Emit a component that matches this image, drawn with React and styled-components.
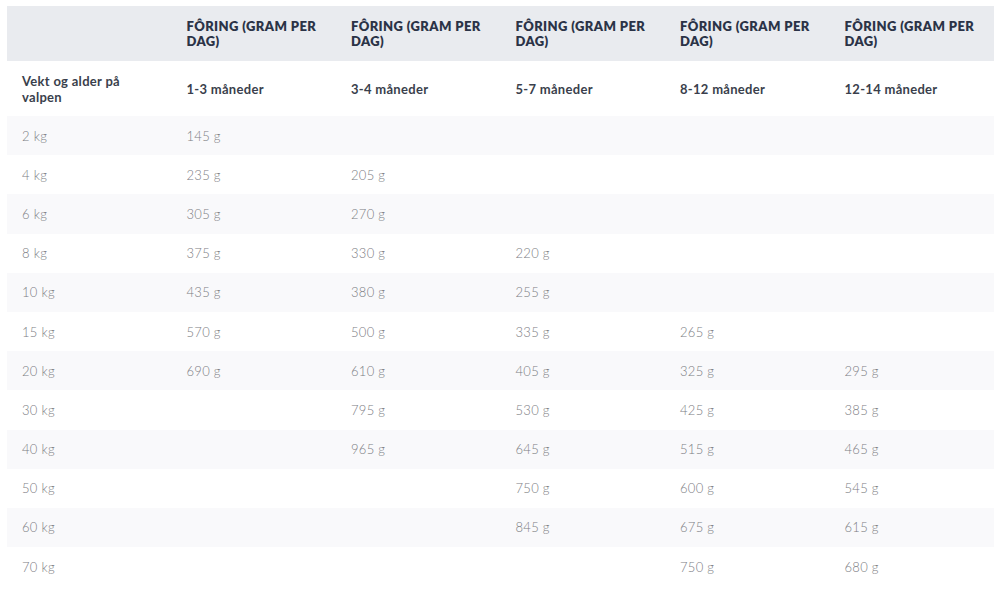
import React from 'react';
import styled, { createGlobalStyle } from 'styled-components';

const GlobalStyle = createGlobalStyle`
  body {
    margin: 0;
    background: #ffffff;
    font-family: "Lato", "Open Sans", sans-serif;
  }
`;

const Wrapper = styled.div`
  padding: 6px 6px 0 7px;
`;

const Table = styled.table`
  width: 987px;
  border-collapse: collapse;
  table-layout: fixed;
`;

const HeadCell = styled.th`
  height: 55px;
  padding: 0 15px;
  background: #e9ebef;
  color: #2b3347;
  font-size: 13px;
  font-weight: 800;
  letter-spacing: 0.4px;
  line-height: 15px;
  text-align: left;
  vertical-align: middle;
  text-transform: uppercase;
`;

const SubCell = styled.td`
  height: 55px;
  padding: 0 15px;
  color: #3a3f4c;
  font-size: 13px;
  font-weight: 700;
  line-height: 16px;
  letter-spacing: 0.3px;
  vertical-align: middle;
`;

const Row = styled.tr`
  background: ${(p) => (p.$shaded ? '#f9f9fb' : '#ffffff')};
`;

const Cell = styled.td`
  height: 39.2px;
  padding: 0 15px;
  color: #7c7d83;
  font-size: 13px;
  font-weight: 300;
  letter-spacing: 0.3px;
  vertical-align: middle;
`;

const ages = ['1-3 måneder', '3-4 måneder', '5-7 måneder', '8-12 måneder', '12-14 måneder'];

const rows = [
  ['2 kg', '145 g', '', '', '', ''],
  ['4 kg', '235 g', '205 g', '', '', ''],
  ['6 kg', '305 g', '270 g', '', '', ''],
  ['8 kg', '375 g', '330 g', '220 g', '', ''],
  ['10 kg', '435 g', '380 g', '255 g', '', ''],
  ['15 kg', '570 g', '500 g', '335 g', '265 g', ''],
  ['20 kg', '690 g', '610 g', '405 g', '325 g', '295 g'],
  ['30 kg', '', '795 g', '530 g', '425 g', '385 g'],
  ['40 kg', '', '965 g', '645 g', '515 g', '465 g'],
  ['50 kg', '', '', '750 g', '600 g', '545 g'],
  ['60 kg', '', '', '845 g', '675 g', '615 g'],
  ['70 kg', '', '', '', '750 g', '680 g'],
];

export default function App() {
  return (
    <Wrapper>
      <GlobalStyle />
      <Table>
        <thead>
          <tr>
            <HeadCell />
            {ages.map((a) => (
              <HeadCell key={a}>Fôring (gram per dag)</HeadCell>
            ))}
          </tr>
        </thead>
        <tbody>
          <tr>
            <SubCell>Vekt og alder på valpen</SubCell>
            {ages.map((a) => (
              <SubCell key={a}>{a}</SubCell>
            ))}
          </tr>
          {rows.map((r, i) => (
            <Row key={r[0]} $shaded={i % 2 === 0}>
              {r.map((c, j) => (
                <Cell key={j}>{c}</Cell>
              ))}
            </Row>
          ))}
        </tbody>
      </Table>
    </Wrapper>
  );
}
